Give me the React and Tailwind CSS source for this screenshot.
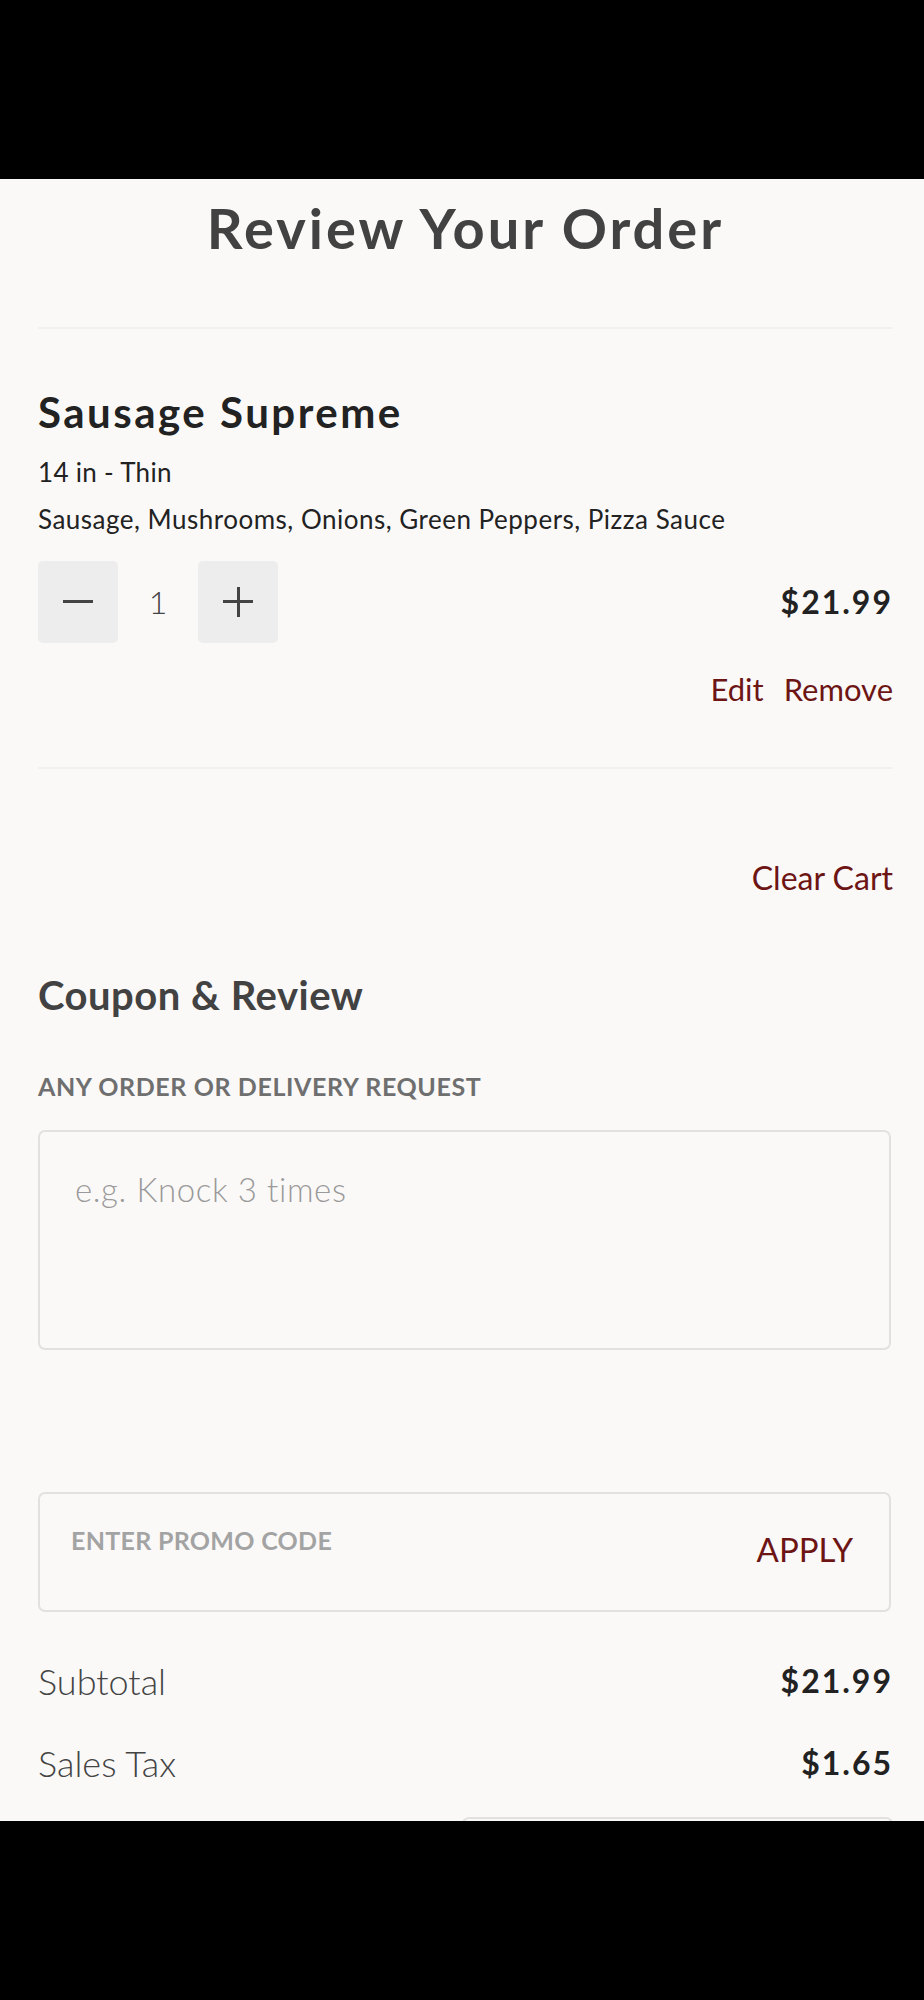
import React, { useState } from 'react';

const maroon = 'text-[#6d1515]';

function QtyButton({ children, onClick }) {
  return (
    <button
      onClick={onClick}
      className="w-[80px] h-[82px] rounded-[5px] bg-[#eeeded] flex items-center justify-center"
    >
      {children}
    </button>
  );
}

function SummaryRow({ label, value }) {
  return (
    <div className="flex items-center justify-between h-[82px]">
      <span className="text-[36px] leading-[1.2] font-light text-[#444]">{label}</span>
      <span className="text-[32px] leading-[1.2] font-bold tracking-[2px] text-[#222]">{value}</span>
    </div>
  );
}

export default function App() {
  const [qty, setQty] = useState(1);
  const [note, setNote] = useState('');
  const [promo, setPromo] = useState('');

  return (
    <div className="w-[924px] h-[2000px] bg-black flex flex-col font-['Lato','Noto_Sans',sans-serif]">
      <div className="h-[179px] shrink-0" />

      <main className="h-[1642px] shrink-0 overflow-hidden bg-[#faf9f8] pl-[38px] pr-[31px]">
        <h1 className="mt-[15px] text-center text-[56px] leading-[1.2] font-bold tracking-[3px] text-[#424242]">
          Review Your Order
        </h1>

        <div className="mt-[66px] h-[2px] bg-[#f2f1f0]" />

        {/* cart item */}
        <section className="pt-[58px]">
          <h2 className="text-[42px] leading-[1.2] font-bold tracking-[2.5px] text-[#222]">Sausage Supreme</h2>
          <p className="mt-[19px] text-[26px] leading-[1.2] tracking-[0.3px] text-[#222]">14 in - Thin</p>
          <p className="mt-[16px] text-[26px] leading-[1.2] tracking-[0.5px] text-[#222]">
            Sausage, Mushrooms, Onions, Green Peppers, Pizza Sauce
          </p>

          <div className="mt-[26px] flex items-center justify-between">
            <div className="flex items-center">
              <QtyButton onClick={() => setQty(Math.max(1, qty - 1))}>
                <span className="block w-[30px] h-[3px] bg-[#444]" />
              </QtyButton>
              <span className="w-[80px] text-center text-[32px] leading-[1.2] font-light text-[#444]">{qty}</span>
              <QtyButton onClick={() => setQty(qty + 1)}>
                <span className="relative block w-[30px] h-[30px]">
                  <span className="absolute left-0 top-[13.5px] w-[30px] h-[3px] bg-[#444]" />
                  <span className="absolute top-0 left-[13.5px] w-[3px] h-[30px] bg-[#444]" />
                </span>
              </QtyButton>
            </div>
            <span className="text-[32px] leading-[1.2] font-bold tracking-[2px] text-[#222]">$21.99</span>
          </div>

          <div className={`mt-[28px] flex justify-end gap-[20px] text-[31px] leading-[1.2] ${maroon}`}>
            <button>Edit</button>
            <button>Remove</button>
          </div>
        </section>

        <div className="mt-[59px] h-[2px] bg-[#f2f1f0]" />

        <div className="mt-[90px] flex justify-end">
          <button className={`text-[32px] leading-[1.2] ${maroon}`}>Clear Cart</button>
        </div>

        {/* coupon & review */}
        <section className="mt-[73px]">
          <h2 className="text-[40px] leading-[1.2] font-bold tracking-[0.5px] text-[#424242]">Coupon &amp; Review</h2>
          <label className="block mt-[52px] text-[25px] leading-[1.2] font-bold uppercase tracking-[0.6px] text-[#6f6f6f]">
            Any order or delivery request
          </label>
          <textarea
            value={note}
            onChange={(e) => setNote(e.target.value)}
            placeholder="e.g. Knock 3 times"
            className="mt-[29px] block w-[853px] h-[220px] resize-none rounded-[7px] border-2 border-[#e2e1e0] bg-transparent pl-[35px] pt-[38px] text-[33px] leading-[1.2] font-light tracking-[0.6px] text-[#333] placeholder:text-[#9a9a9a] outline-none"
          />

          <div className="mt-[142px] w-[853px] h-[120px] rounded-[7px] border-2 border-[#e2e1e0] flex items-start justify-between pl-[31px] pr-[36px]">
            <input
              value={promo}
              onChange={(e) => setPromo(e.target.value)}
              placeholder="ENTER PROMO CODE"
              className="mt-[31px] w-[400px] bg-transparent text-[25px] leading-[1.2] font-bold uppercase tracking-[0.3px] text-[#333] placeholder:text-[#a3a3a3] outline-none"
            />
            <button className={`mt-[36px] text-[33px] leading-[1.2] ${maroon}`}>APPLY</button>
          </div>
        </section>

        {/* totals */}
        <section className="mt-[29px]">
          <SummaryRow label="Subtotal" value="$21.99" />
          <SummaryRow label="Sales Tax" value="$1.65" />
          <div className="mt-[12px] ml-[424px] h-[60px] rounded-t-[7px] border-2 border-[#e2e1e0]" />
        </section>
      </main>
    </div>
  );
}
